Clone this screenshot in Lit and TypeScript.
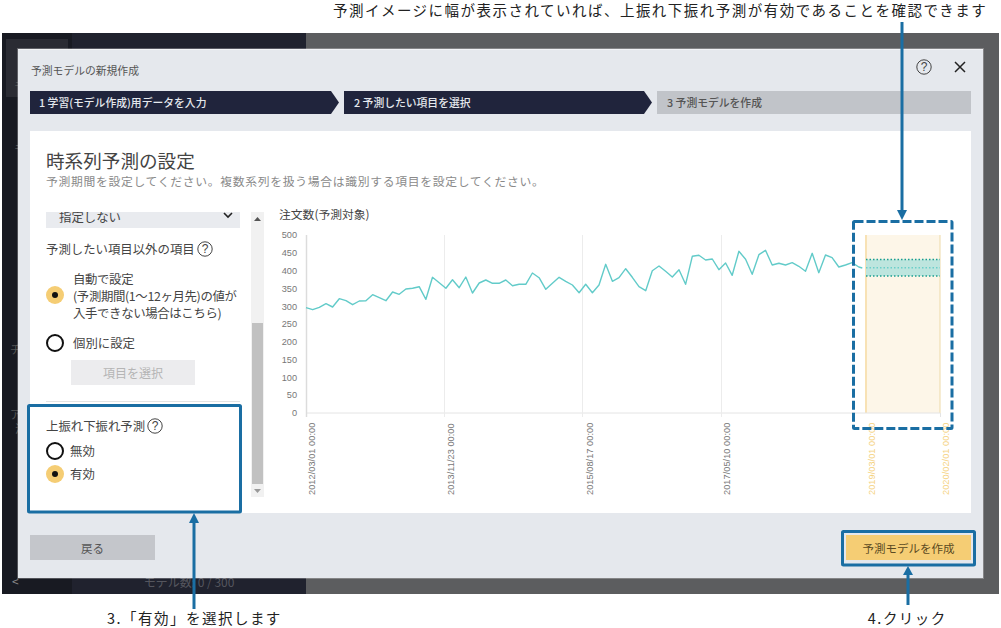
import { LitElement, css, html, svg } from "lit";
import { customElement } from "lit/decorators.js";

// line samples read off the reference, y in page px * 3 with origin 205
const SERIES = [
  308, 314, 307, 296, 306, 281, 287, 299, 288, 287, 269, 278, 287, 261, 268, 252, 250, 245, 283, 217,
  233, 250, 224, 248, 216, 264, 234, 225, 235, 235, 225, 242, 238, 238, 204, 218, 253, 235, 217, 229,
  240, 263, 238, 263, 240, 178, 229, 218, 191, 217, 245, 257, 197, 183, 199, 216, 194, 238, 154, 151,
  165, 162, 194, 174, 211, 139, 163, 208, 149, 136, 180, 175, 180, 173, 184, 199, 145, 203, 150, 158,
  186, 180, 173, 186,
];

const Y_TICKS = [500, 450, 400, 350, 300, 250, 200, 150, 100, 50, 0];

const X_LABELS = [
  { x: 306, labelX: 315, text: "2012/03/01 00:00", future: false },
  { x: 444, labelX: 453.5, text: "2013/11/23 00:00", future: false },
  { x: 582, labelX: 592.5, text: "2015/08/17 00:00", future: false },
  { x: 721, labelX: 730, text: "2017/05/10 00:00", future: false },
  { x: 865, labelX: 875, text: "2019/03/01 00:00", future: true },
  { x: 940, labelX: 949, text: "2020/02/01 00:00", future: true },
];

const helpIcon = (size: number) => html`
  <svg class="help" width=${size} height=${size} viewBox="0 0 16 16">
    <circle cx="8" cy="8" r="7.2" fill="none" stroke="#444" stroke-width="1"></circle>
    <text x="8" y="12.2" text-anchor="middle" font-size="12" fill="#444" font-family="Liberation Sans, sans-serif">?</text>
  </svg>
`;

@customElement("app-root")
export class AppRoot extends LitElement {
  static styles = css`
    :host {
      display: block;
      position: relative;
      width: 1001px;
      height: 628px;
      overflow: hidden;
      background: #fff;
      color: #444;
      font-family: "Noto Sans CJK JP", "Noto Sans", sans-serif;
    }
    .note {
      font-size: 14.5px;
      color: #222;
      letter-spacing: 1.48px;
      white-space: nowrap;
    }
    .top-note {
      height: 33px;
      padding-left: 333px;
      line-height: 19px;
      box-sizing: border-box;
    }
    .bottom-notes {
      height: 34px;
      display: flex;
      padding: 14px 0 0 107px;
      box-sizing: border-box;
      line-height: 20px;
    }
    .bottom-notes .second {
      margin-left: 586px;
    }
    .stage {
      position: relative;
      display: flex;
      height: 561px;
      width: 997px;
      margin-left: 2px;
    }
    .rail {
      width: 70px;
      background: #181a22;
      box-sizing: border-box;
      padding: 6px 0 0 4px;
      color: #555;
      font-size: 11px;
      line-height: 14px;
    }
    .rail-box {
      width: 62px;
      height: 58px;
      box-sizing: border-box;
      padding: 39px 0 0 8px;
      background: #2a2b33;
      margin-bottom: 44px;
    }
    .rail-item {
      padding-left: 4px;
      white-space: nowrap;
    }
    .rail-side {
      padding-left: 8px;
    }
    .rail-chat {
      margin-top: 187px;
    }
    .rail-app {
      margin-top: 51px;
    }
    .rail-back {
      margin-top: 139px;
      font-size: 12px;
      color: #888;
      padding-left: 6px;
    }
    .nav {
      width: 234px;
      background: #20222e;
      display: flex;
      align-items: flex-end;
      justify-content: center;
      box-sizing: border-box;
      padding: 0 0 5px 0;
      color: #55565e;
      font-size: 12px;
      line-height: 14px;
    }
    .backdrop {
      flex: 1;
      background: #5c5d5f;
    }
    .dialog {
      position: absolute;
      left: 16px;
      top: 16px;
      width: 965px;
      height: 529px;
      box-sizing: border-box;
      background: #e5e8ed;
      border-top: 1px solid #f2f3f5;
      box-shadow: 0 0 0 1px rgba(255, 255, 255, 0.25);
      padding: 0 12px;
      display: flex;
      flex-direction: column;
    }
    .dialog-head {
      height: 41px;
      display: flex;
      align-items: center;
      justify-content: space-between;
      font-size: 10.8px;
      color: #555;
      padding: 0 1px;
      box-sizing: border-box;
    }
    .dialog-head > span {
      margin-top: -2px;
    }
    .head-icons {
      display: flex;
      align-items: center;
      gap: 22px;
      padding: 0 4px 8px 0;
    }
    .help {
      display: block;
      flex: none;
    }
    .steps {
      display: flex;
      height: 23px;
      gap: 5px;
      font-size: 10.8px;
      line-height: 23px;
    }
    .step {
      background: #20243c;
      color: #e5e8ed;
      font-weight: 500;
      padding-left: 9px;
      box-sizing: border-box;
      clip-path: polygon(0 0, calc(100% - 8px) 0, 100% 50%, calc(100% - 8px) 100%, 0 100%);
    }
    .step-one {
      width: 309px;
    }
    .step-two {
      width: 308px;
      padding-left: 10px;
    }
    .step-three {
      flex: 1;
      padding-left: 10px;
      background: #c1c4c9;
      color: #555;
      clip-path: none;
    }
    .panel {
      margin-top: 17px;
      height: 382px;
      flex: none;
      background: #fff;
      box-sizing: border-box;
      padding: 18px 0 0 16px;
    }
    h1 {
      margin: -1px 0 1px;
      font-size: 18.6px;
      font-weight: 400;
      line-height: 24px;
      color: #444;
    }
    .sub {
      font-size: 11.8px;
      line-height: 16px;
      letter-spacing: 0.7px;
      color: #8a8a8a;
    }
    .body {
      margin-top: 23px;
      display: flex;
      height: 301px;
    }
    .form {
      width: 194px;
      height: 288px;
      overflow: hidden;
      font-size: 12.4px;
      line-height: 17px;
    }
    .select {
      margin-top: -10px;
      height: 26px;
      box-sizing: border-box;
      padding: 4px 7px 0 13px;
      background: #e9ebef;
      display: flex;
      justify-content: space-between;
      align-items: flex-start;
      line-height: 22px;
    }
    .select svg {
      margin-top: 6px;
    }
    .label {
      display: flex;
      align-items: center;
      gap: 2px;
      height: 20px;
    }
    .label-first {
      margin-top: 11px;
    }
    .option {
      display: flex;
      align-items: center;
      gap: 9px;
    }
    .multi-line {
      white-space: nowrap;
      letter-spacing: -0.35px;
    }
    .auto {
      margin-top: 12px;
    }
    .auto .radio {
      margin-bottom: 4px;
    }
    .manual {
      margin-top: 12px;
    }
    .compact {
      gap: 6px;
      height: 20px;
    }
    .compact-first {
      margin-top: 5px;
    }
    .compact-second {
      margin-top: 3px;
    }
    .radio {
      width: 18px;
      height: 18px;
      flex: none;
      box-sizing: border-box;
      border-radius: 50%;
      background: #fff;
      border: 2px solid #111;
    }
    .radio.on {
      border: 0;
      background: #f5cd74;
      display: flex;
      align-items: center;
      justify-content: center;
    }
    .radio.on::after {
      content: "";
      width: 6px;
      height: 6px;
      border-radius: 50%;
      background: #111;
    }
    .pick {
      margin: 8px 0 0 25px;
      width: 124px;
      height: 25px;
      background: #ececee;
      color: #b5b5b5;
      display: flex;
      align-items: center;
      justify-content: center;
      font-size: 12px;
    }
    .rule {
      margin: 16px 0 14px;
      height: 1px;
      background: #e3e3e3;
    }
    .scrollbar {
      margin-left: 11px;
      width: 13px;
      height: 285px;
      flex: none;
      box-sizing: border-box;
      padding: 0 1px;
      background: #f1f1f1;
      display: flex;
      flex-direction: column;
      justify-content: space-between;
      align-items: stretch;
    }
    .arrow {
      height: 13px;
      display: flex;
      align-items: center;
      justify-content: center;
    }
    .thumb {
      height: 161px;
      margin-top: 98px;
      background: #c1c1c1;
    }
    .chart {
      margin-left: 7px;
      flex: 1;
      min-width: 0;
    }
    .chart-title {
      margin-top: -5px;
      padding-left: 8px;
      font-size: 11.8px;
      line-height: 14px;
      height: 18px;
      color: #444;
    }
    .chart svg {
      display: block;
    }
    .y-tick {
      font: 9.2px "Liberation Sans", sans-serif;
      fill: #777;
    }
    .x-tick {
      font: 9.2px "Liberation Sans", sans-serif;
      letter-spacing: 0.05px;
      fill: #777;
    }
    .x-tick.future {
      fill: #f5d27f;
    }
    .dialog-foot {
      margin-top: 22px;
      display: flex;
      justify-content: space-between;
    }
    .btn {
      height: 25px;
      width: 125px;
      display: flex;
      align-items: center;
      justify-content: center;
      font-size: 11.5px;
      color: #555;
      background: #c4c6cb;
    }
    .btn.primary {
      background: #f5cd74;
      color: #5b4a22;
    }
    .overlay {
      position: absolute;
      left: 0;
      top: 0;
      pointer-events: none;
    }
  `;

  private renderChart() {
    const pts = SERIES.map((v, i) => `${(306 + i * 6.66).toFixed(1)},${(205 + v / 3).toFixed(1)}`);
    pts.push("862.3,268");
    return html`
      <svg width="690" height="287" viewBox="271 225 690 287">
        <rect x="865" y="235" width="75" height="178" fill="#fdf6e8"></rect>
        <rect x="865" y="235" width="2" height="178" fill="#f8e2b5"></rect>
        <rect x="939.5" y="235" width="1" height="178" fill="#eed9a8"></rect>
        <line x1="306" x2="940" y1="413" y2="413" stroke="#e4e4e4"></line>
        ${X_LABELS.map(
          (l, i) => svg`
            <line x1=${l.x + 0.5} x2=${l.x + 0.5} y1="235" y2="417" stroke=${i === 0 ? "#dcdcdc" : "#ececec"} stroke-width=${i === 0 ? 1.5 : 1} opacity=${l.future ? 0 : 1}></line>
            <text class="x-tick ${l.future ? "future" : ""}" transform="translate(${l.labelX},495) rotate(-90)">${l.text}</text>
          `,
        )}
        <line x1="940.5" x2="940.5" y1="413" y2="417" stroke="#e4e4e4"></line>
        ${Y_TICKS.map(
          (t, i) => svg`<text class="y-tick" x="297" y=${238.4 + i * 17.78} text-anchor="end">${t}</text>`,
        )}
        <rect x="866" y="259.5" width="74" height="16.5" fill="#bde5de"></rect>
        <line x1="866" x2="940" y1="259.5" y2="259.5" stroke="#1a9e8f" stroke-width="1.5" stroke-dasharray="1.5 2"></line>
        <line x1="866" x2="940" y1="276" y2="276" stroke="#1a9e8f" stroke-width="1.5" stroke-dasharray="1.5 2"></line>
        <line x1="866" x2="940" y1="267.7" y2="267.7" stroke="#6ccfc9" stroke-width="1.5" stroke-dasharray="1.5 2"></line>
        <polyline points=${pts.join(" ")} fill="none" stroke="#62cbc9" stroke-width="1.4" stroke-linejoin="round"></polyline>
      </svg>
    `;
  }

  private renderOverlay() {
    const blue = "#1a6ea3";
    return html`
      <svg class="overlay" width="1001" height="628" viewBox="0 0 1001 628">
        <rect x="28.5" y="405.5" width="212" height="106.5" rx="1" fill="none" stroke=${blue} stroke-width="3"></rect>
        <rect x="842.5" y="531.5" width="132" height="33.5" rx="1" fill="none" stroke=${blue} stroke-width="3"></rect>
        <rect x="853.5" y="221.5" width="98.5" height="207" rx="1" fill="none" stroke=${blue} stroke-width="3" stroke-dasharray="9 3"></rect>
        <line x1="902" x2="902" y1="22" y2="212" stroke=${blue} stroke-width="3"></line>
        <polygon points="897,210 907,210 902,220" fill=${blue}></polygon>
        <line x1="194" x2="194" y1="609" y2="520" stroke=${blue} stroke-width="3"></line>
        <polygon points="189,523 199,523 194,513" fill=${blue}></polygon>
        <line x1="908" x2="908" y1="605" y2="573" stroke=${blue} stroke-width="3"></line>
        <polygon points="903,575 913,575 908,566" fill=${blue}></polygon>
      </svg>
    `;
  }

  render() {
    return html`
      <div class="note top-note">予測イメージに幅が表示されていれば、上振れ下振れ予測が有効であることを確認できます</div>
      <div class="stage">
        <div class="rail">
          <div class="rail-box">モ</div>
          <div class="rail-item rail-side">モ</div>
          <div class="rail-item rail-chat">チ</div>
          <div class="rail-item rail-app">ア<br />&nbsp;&nbsp;注</div>
          <div class="rail-back">&lt;</div>
        </div>
        <div class="nav">モデル数: 0 / 300</div>
        <div class="backdrop"></div>
        <div class="dialog">
          <div class="dialog-head">
            <span>予測モデルの新規作成</span>
            <div class="head-icons">
              ${helpIcon(16)}
              <svg width="12" height="12" viewBox="0 0 12 12">
                <path d="M1 1 L11 11 M11 1 L1 11" stroke="#222" stroke-width="1.5" fill="none"></path>
              </svg>
            </div>
          </div>
          <div class="steps">
            <div class="step step-one">1 学習(モデル作成)用データを入力</div>
            <div class="step step-two">2 予測したい項目を選択</div>
            <div class="step step-three">3 予測モデルを作成</div>
          </div>
          <div class="panel">
            <h1>時系列予測の設定</h1>
            <div class="sub">予測期間を設定してください。複数系列を扱う場合は識別する項目を設定してください。</div>
            <div class="body">
              <div class="form">
                <div class="select">
                  <span>指定しない</span>
                  <svg width="10" height="7" viewBox="0 0 10 7">
                    <path d="M1 1 L5 5 L9 1" stroke="#222" stroke-width="1.6" fill="none"></path>
                  </svg>
                </div>
                <div class="label label-first">予測したい項目以外の項目${helpIcon(16)}</div>
                <div class="option auto">
                  <span class="radio on"></span>
                  <span class="multi-line">自動で設定<br />(予測期間(1～12ヶ月先)の値が<br />入手できない場合はこちら)</span>
                </div>
                <div class="option manual">
                  <span class="radio"></span>
                  <span>個別に設定</span>
                </div>
                <div class="pick">項目を選択</div>
                <div class="rule"></div>
                <div class="label">上振れ下振れ予測${helpIcon(16)}</div>
                <div class="option compact compact-first">
                  <span class="radio"></span>
                  <span>無効</span>
                </div>
                <div class="option compact compact-second">
                  <span class="radio on"></span>
                  <span>有効</span>
                </div>
              </div>
              <div class="scrollbar">
                <div class="arrow">
                  <svg width="7" height="4" viewBox="0 0 7 4"><path d="M0 4 L3.5 0 L7 4 Z" fill="#555"></path></svg>
                </div>
                <div class="thumb"></div>
                <div class="arrow">
                  <svg width="7" height="4" viewBox="0 0 7 4"><path d="M0 0 L3.5 4 L7 0 Z" fill="#999"></path></svg>
                </div>
              </div>
              <div class="chart">
                <div class="chart-title">注文数(予測対象)</div>
                ${this.renderChart()}
              </div>
            </div>
          </div>
          <div class="dialog-foot">
            <div class="btn">戻る</div>
            <div class="btn primary">予測モデルを作成</div>
          </div>
        </div>
      </div>
      <div class="note bottom-notes">
        <span>3.「有効」を選択します</span>
        <span class="second">4.クリック</span>
      </div>
      ${this.renderOverlay()}
    `;
  }
}
